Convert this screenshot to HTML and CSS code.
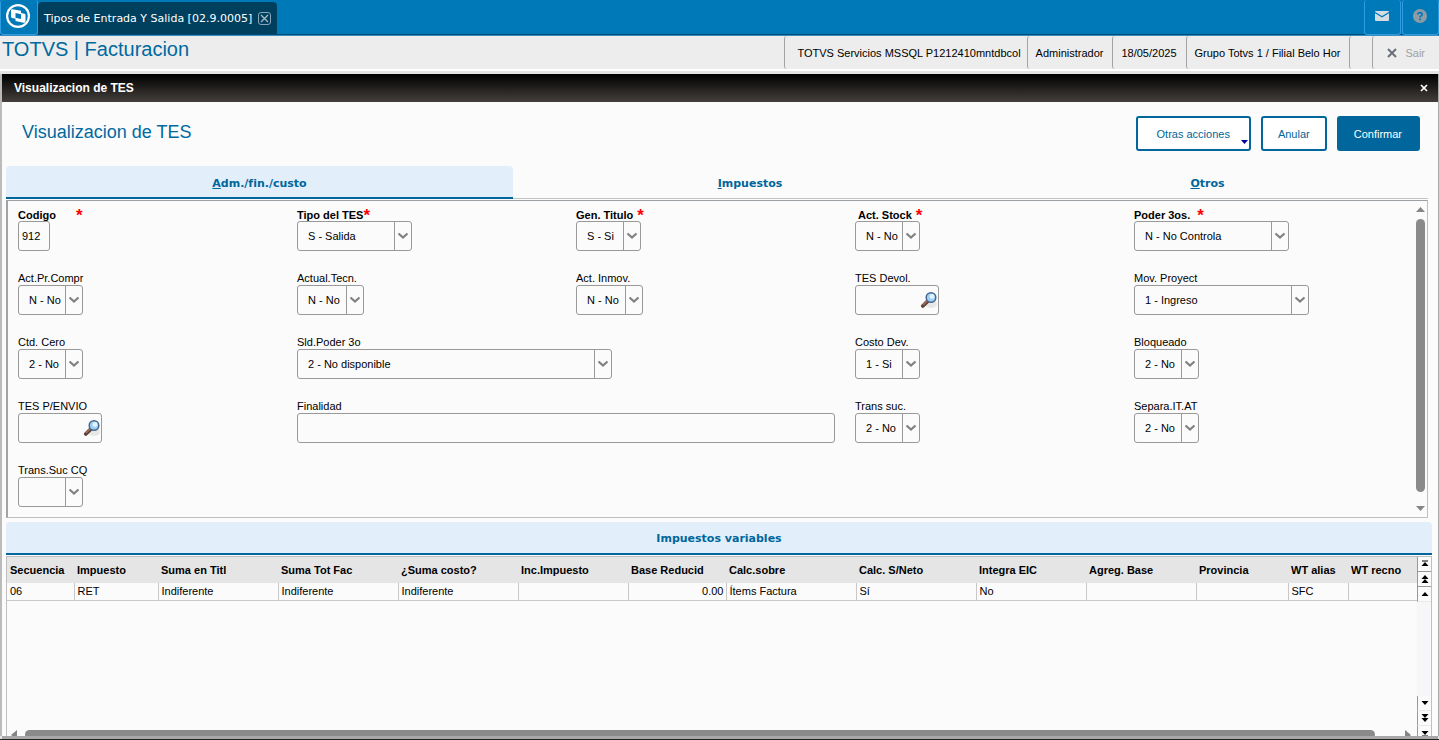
FILE: index.html
```html
<!DOCTYPE html>
<html lang="es">
<head>
<meta charset="utf-8">
<title>TOTVS | Facturacion</title>
<link rel="stylesheet" href="styles.css">
</head>
<body>
<svg class="defs" aria-hidden="true">
  <symbol id="chevron" viewBox="0 0 12 8"><path d="M1.5 1.5 L6 5.5 L10.500 1.500" fill="none" stroke="#808080" stroke-width="2.200"/></symbol>
  <symbol id="lens" viewBox="0 0 18 18">
    <ellipse cx="11" cy="13" rx="6" ry="4" fill="#000" opacity=".08"/>
    <path d="M2.800 15 L8 9.800" stroke="#5d4238" stroke-width="3.800" stroke-linecap="round"/>
    <path d="M3 14 L7.500 9.500" stroke="#a5705a" stroke-width="1.400"/>
    <circle cx="11" cy="6.500" r="4.800" fill="#9fd0f3" stroke="#48698f" stroke-width="1.500"/>
    <circle cx="12" cy="5.500" r="2.400" fill="#e3f3fd"/>
  </symbol>
</svg>
<header class="appbar">
  <button class="logo" aria-label="TOTVS">
    <svg width="24" height="24" viewBox="0 0 24 24"><circle cx="12" cy="12" r="12" fill="#fff"/><circle cx="12" cy="12" r="9.800" fill="#0079b8"/><path d="M5 6 Q5.200 5.200 6.500 5.300 L15 6.800 V9 L18.500 9.800 Q19.500 10.100 19.500 11 V17.500 Q19 19 17.500 18.700 L9.500 17 V14.800 L6 14 Q5 13.800 5 12.500 Z" fill="#fff"/><path d="M9.500 9 L15 10.200 V15 L9.500 13.800 Z" fill="#0079b8"/></svg>
  </button>
  <div class="apptab">
    <span>Tipos de Entrada Y Salida [02.9.0005]</span>
    <button class="tabclose" aria-label="Cerrar"><svg width="13" height="13" viewBox="0 0 13 13"><rect x=".5" y=".5" width="12" height="12" rx="2.500" fill="none" stroke="#8ba5b8"/><path d="M3 3 L10 10 M10 3 L3 10" stroke="#a9bac7" stroke-width="1.300"/></svg></button>
  </div>
  <div class="tools">
    <button aria-label="Mensajes"><svg width="14" height="10" viewBox="0 0 14 10"><rect width="14" height="10" rx="1" fill="#d5dde3"/><path d="M0 1.500 L7 5.800 L14 1.500" fill="none" stroke="#0079b8" stroke-width="1.300"/></svg></button>
    <button aria-label="Ayuda"><svg width="14" height="14" viewBox="0 0 14 14"><circle cx="7" cy="7" r="7" fill="#8e9ba5"/><path d="M4.800 5.500 Q4.900 3.600 7 3.600 Q9.200 3.600 9.200 5.300 Q9.200 6.300 8 7 Q7 7.500 7 8.500" fill="none" stroke="#0079b8" stroke-width="1.700"/><rect x="6.100" y="9.500" width="1.800" height="1.700" fill="#0079b8"/></svg></button>
  </div>
</header>
<div class="infobar">
  <h1>TOTVS | Facturacion</h1>
  <div class="info">
    <span class="cell env">TOTVS Servicios MSSQL P1212410mntdbcol</span>
    <span class="cell">Administrador</span>
    <span class="cell">18/05/2025</span>
    <span class="cell">Grupo Totvs 1 / Filial Belo Hor</span>
    <span class="cell blank"></span>
    <button class="cell exit"><svg width="10" height="10" viewBox="0 0 10 10"><path d="M1 1 L9 9 M9 1 L1 9" stroke="#6b7078" stroke-width="2"/></svg>Sair</button>
  </div>
</div>
<main class="dialog">
  <div class="titlebar"><span>Visualizacion de TES</span><button aria-label="Cerrar ventana"><svg width="8" height="8" viewBox="0 0 8 8"><path d="M1 1 L7 7 M7 1 L1 7" stroke="#fff" stroke-width="1.700"/></svg></button></div>
  <div class="heading">
    <h2>Visualizacion de TES</h2>
    <div class="actions">
      <button class="btn more">Otras acciones<svg class="caret" width="7" height="4" viewBox="0 0 7 4"><path d="M0 0 H7 L3.500 4 Z" fill="#00009c"/></svg></button>
      <button class="btn">Anular</button>
      <button class="btn primary">Confirmar</button>
    </div>
  </div>
  <nav class="tabs">
    <a class="tab active" href="#adm"><span><u>A</u>dm./fin./custo</span></a>
    <a class="tab mid" href="#imp"><span><u>I</u>mpuestos</span></a>
    <a class="tab last" href="#otros"><span><u>O</u>tros</span></a>
  </nav>
  <section class="panel" id="adm">
    <form class="fields">
      <div class="field"><div class="req far"><label for="f1">Codigo</label><b class="star">*</b></div><input id="f1" class="w-code" value="912"></div>
      <div class="field"><div class="req near"><label for="f2">Tipo del TES</label><b class="star">*</b></div><span class="sel w-115"><select id="f2"><option>S - Salida</option></select><i><svg><use href="#chevron"/></svg></i></span></div>
      <div class="field"><div class="req"><label for="f3">Gen. Titulo</label><b class="star">*</b></div><span class="sel w-65"><select id="f3"><option>S - Si</option></select><i><svg><use href="#chevron"/></svg></i></span></div>
      <div class="field"><div class="req indent"><label for="f4">Act. Stock</label><b class="star">*</b></div><span class="sel w-65"><select id="f4"><option>N - No</option></select><i><svg><use href="#chevron"/></svg></i></span></div>
      <div class="field"><div class="req wide"><label for="f5">Poder 3os.</label><b class="star">*</b></div><span class="sel w-155"><select id="f5"><option>N - No Controla</option></select><i><svg><use href="#chevron"/></svg></i></span></div>

      <div class="field"><label for="f6">Act.Pr.Compr</label><span class="sel w-65"><select id="f6"><option>N - No</option></select><i><svg><use href="#chevron"/></svg></i></span></div>
      <div class="field"><label for="f7">Actual.Tecn.</label><span class="sel w-67"><select id="f7"><option>N - No</option></select><i><svg><use href="#chevron"/></svg></i></span></div>
      <div class="field"><label for="f8">Act. Inmov.</label><span class="sel w-67"><select id="f8"><option>N - No</option></select><i><svg><use href="#chevron"/></svg></i></span></div>
      <div class="field"><label for="f9">TES Devol.</label><span class="lookup"><input id="f9"><button type="button" aria-label="Buscar TES Devol."><svg><use href="#lens"/></svg></button></span></div>
      <div class="field"><label for="f10">Mov. Proyect</label><span class="sel w-175"><select id="f10"><option>1 - Ingreso</option></select><i><svg><use href="#chevron"/></svg></i></span></div>

      <div class="field"><label for="f11">Ctd. Cero</label><span class="sel w-65"><select id="f11"><option>2 - No</option></select><i><svg><use href="#chevron"/></svg></i></span></div>
      <div class="field span2"><label for="f12">Sld.Poder 3o</label><span class="sel w-315"><select id="f12"><option>2 - No disponible</option></select><i><svg><use href="#chevron"/></svg></i></span></div>
      <div class="field"><label for="f13">Costo Dev.</label><span class="sel w-65"><select id="f13"><option>1 - Si</option></select><i><svg><use href="#chevron"/></svg></i></span></div>
      <div class="field"><label for="f14">Bloqueado</label><span class="sel w-65"><select id="f14"><option>2 - No</option></select><i><svg><use href="#chevron"/></svg></i></span></div>

      <div class="field"><label for="f15">TES P/ENVIO</label><span class="lookup"><input id="f15"><button type="button" aria-label="Buscar TES P/ENVIO"><svg><use href="#lens"/></svg></button></span></div>
      <div class="field span2"><label for="f16">Finalidad</label><input id="f16" class="w-full"></div>
      <div class="field"><label for="f17">Trans suc.</label><span class="sel w-65"><select id="f17"><option>2 - No</option></select><i><svg><use href="#chevron"/></svg></i></span></div>
      <div class="field"><label for="f18">Separa.IT.AT</label><span class="sel w-65"><select id="f18"><option>2 - No</option></select><i><svg><use href="#chevron"/></svg></i></span></div>

      <div class="field"><label for="f19">Trans.Suc CQ</label><span class="sel w-65"><select id="f19"><option></option></select><i><svg><use href="#chevron"/></svg></i></span></div>
    </form>
    <div class="vscroll">
      <svg width="9" height="5" viewBox="0 0 9 5"><path d="M0 5 L4.500 0 L9 5 Z" fill="#858585"/></svg>
      <div class="thumb"></div>
      <svg class="down" width="9" height="5" viewBox="0 0 9 5"><path d="M0 0 L4.500 5 L9 0 Z" fill="#858585"/></svg>
    </div>
  </section>
  <h3 class="gridtitle">Impuestos variables</h3>
  <section class="grid">
    <div class="gridmain">
      <table>
        <colgroup><col class="c67"><col class="c84"><col class="c120"><col class="c120"><col class="c120"><col class="c110"><col class="c98"><col class="c130"><col class="c120"><col class="c110"><col class="c110"><col class="c92"><col class="c60"><col></colgroup>
        <thead><tr><th>Secuencia</th><th>Impuesto</th><th>Suma en Titl</th><th>Suma Tot Fac</th><th>¿Suma costo?</th><th>Inc.Impuesto</th><th>Base Reducid</th><th>Calc.sobre</th><th>Calc. S/Neto</th><th>Integra EIC</th><th>Agreg. Base</th><th>Provincia</th><th>WT alias</th><th>WT recno</th></tr></thead>
        <tbody><tr><td>06</td><td>RET</td><td>Indiferente</td><td>Indiferente</td><td>Indiferente</td><td></td><td class="num">0.00</td><td>Ítems Factura</td><td>Sí</td><td>No</td><td></td><td></td><td>SFC</td><td></td></tr></tbody>
      </table>
      <div class="hscroll">
        <svg width="6" height="10" viewBox="0 0 6 10"><path d="M6 0 L0 5 L6 10 Z" fill="#858585"/></svg>
        <div class="thumb"></div>
        <svg width="6" height="10" viewBox="0 0 6 10"><path d="M0 0 L6 5 L0 10 Z" fill="#858585"/></svg>
      </div>
    </div>
    <div class="gridnav">
      <button aria-label="Primero"><svg width="8" height="8" viewBox="0 0 8 8"><path d="M1 1 H7" stroke="#000"/><path d="M4 2 L7.500 6 H.5 Z"/></svg></button>
      <button aria-label="Página anterior"><svg width="8" height="8" viewBox="0 0 8 8"><path d="M4 0 L7.500 4 H.5 Z M4 4 L7.500 8 H.5 Z"/></svg></button>
      <button class="plain" aria-label="Anterior"><svg width="8" height="8" viewBox="0 0 8 8"><path d="M4 2 L7.500 6 H.5 Z"/></svg></button>
      <button class="plain low" aria-label="Siguiente"><svg width="8" height="8" viewBox="0 0 8 8"><path d="M4 6 L7.500 2 H.5 Z"/></svg></button>
      <button class="plain" aria-label="Página siguiente"><svg width="8" height="8" viewBox="0 0 8 8"><path d="M4 4 L7.500 0 H.5 Z M4 8 L7.500 4 H.5 Z"/></svg></button>
      <button class="plain" aria-label="Último"><svg width="8" height="8" viewBox="0 0 8 8"><path d="M4 6 L7.500 2 H.5 Z"/><path d="M1 7 H7" stroke="#000"/></svg></button>
    </div>
  </section>
</main>
</body>
</html>
```

FILE: styles.css
```css
* { box-sizing: border-box; }
body { margin: 0; height: 100vh; display: flex; flex-direction: column; overflow: hidden; background: #e4e4e4; color: #000; font: 11px "Liberation Sans", Arial, sans-serif; border-bottom: 1px solid #222; }
button, input, select { font: inherit; color: inherit; }
button { background: none; border: 0; padding: 0; margin: 0; cursor: pointer; }
h1, h2, h3 { margin: 0; font-weight: normal; }
svg { display: block; flex: none; }
.defs { position: absolute; width: 0; height: 0; }

.appbar { flex: none; height: 36px; display: flex; background: #0079b8; border-bottom: 1px solid #3b8fc0; box-shadow: inset 0 -1px #004a73; }
.logo { width: 38px; height: 35px; padding: 0 0 3px 5px; border: 1px solid #2f9be0; border-top: 0; border-radius: 3px; background: #0079b8; }
.apptab { display: flex; align-items: center; gap: 6px; margin-top: 2px; padding: 0 6px; height: 32px; background: #00405f; border-radius: 4px 4px 0 0; color: #fff; font: 11px "DejaVu Sans", sans-serif; }
.tools { margin-left: auto; display: flex; gap: 1px; }
.tools button { width: 37px; height: 35px; padding: 0 2px 3px 0; display: grid; place-items: center; border: 1px solid #2f9be0; border-top: 0; border-radius: 3px; background: #0079b8; }

.infobar { flex: none; height: 35px; display: flex; justify-content: space-between; background: #ededed; border-bottom: 2px solid #fff; }
.infobar h1 { padding-left: 2px; font-size: 20px; line-height: 26px; color: #0069a0; }
.info { display: flex; }
.cell { display: flex; align-items: center; padding: 0 9px 0 8px; border-left: 1px solid #a3a3a3; border-radius: 3px; }
.env { padding: 0 6px 0 12px; }
.blank { width: 23px; padding: 0; }
.exit { gap: 8px; padding: 0 14px; color: #a0a0a0; border-left: 1px solid #a3a3a3; }

.dialog { flex: 1; min-height: 0; display: flex; flex-direction: column; margin: 3px 1px 3px 2px; background: #fbfbfb; box-shadow: -2px 0 #bbb, 1px 0 #a8a8a8, 0 3px #a8a8a8; overflow: hidden; }
.titlebar { flex: none; height: 28px; display: flex; align-items: center; justify-content: space-between; padding: 0 10px 0 12px; background: linear-gradient(#000, #443f3c); color: #fff; font-size: 12px; font-weight: bold; }
.heading { flex: none; display: flex; justify-content: space-between; padding: 14px 18px 15px 20px; }
.heading h2 { font-size: 18px; line-height: 32px; color: #0069a0; }
.actions { display: flex; gap: 10px; }
.btn { height: 35px; padding: 0 15px; border: 2px solid #00669b; border-radius: 3px; background: #fff; color: #00669b; }
.more { position: relative; padding: 0 19px; }
.caret { position: absolute; right: 1px; bottom: 5px; }
.primary { padding: 0 16px 0 15px; background: #00669b; color: #fff; }

.tabs { flex: none; display: flex; margin: 0 10px 0 4px; }
.tab { flex: 507 1 0; height: 33px; padding-top: 3px; display: grid; place-items: center; border-bottom: 2px solid #00669b; border-radius: 4px 4px 0 0; color: #00669b; font: bold 11px "DejaVu Sans", sans-serif; text-decoration: none; }
.active { background: #e2eefa; }
.mid { flex-grow: 474; border-bottom: 1px solid #c4c4c4; border-radius: 0; }
.last { flex-grow: 441; border-bottom: 1px solid #c4c4c4; border-radius: 0; }
.panel { flex: none; display: flex; margin: 1px 10px 4px 4px; border: 1px solid #bfbfbf; border-top-color: #9ba0a5; border-left: 2px solid #a0a4a6; }
.fields { flex: 1; display: grid; grid-template-columns: repeat(5, minmax(0, 1fr)); row-gap: 20px; padding: 6px 0 10px 10px; }
.field { display: flex; flex-direction: column; align-items: flex-start; }
.field label { line-height: 14px; }
.req { display: flex; gap: 4px; height: 14px; font-weight: bold; }
.req label { line-height: 16px; }
.star { color: #f00; font-size: 17px; line-height: 17px; }
.far { gap: 20px; }
.near { gap: 0; }
.wide { gap: 7px; }
.indent { padding-left: 3px; }
.span2 { grid-column: span 2; }
.field input, .sel, .lookup { height: 30px; border: 1px solid #999; border-radius: 3px; background: #fbfbfb; }
.field input { padding: 0 3px; outline: 0; }
.sel { position: relative; display: block; overflow: hidden; }
.sel select { appearance: none; width: 100%; height: 28px; padding: 0 17px 0 10px; border: 0; outline: 0; background: transparent; }
.sel i { position: absolute; top: 0; right: 0; width: 17px; height: 28px; display: grid; place-items: center; border-left: 1px solid #999; pointer-events: none; }
.sel svg { width: 12px; height: 8px; }
.lookup { width: 84px; display: flex; align-items: center; }
.field .lookup input { flex: 1; min-width: 0; height: 26px; border: 0; }
.lookup svg { width: 18px; height: 18px; }
.w-code { width: 32px; }
.w-65 { width: 65px; }
.w-67 { width: 67px; }
.w-115 { width: 115px; }
.w-155 { width: 155px; }
.w-175 { width: 175px; }
.w-315 { width: 315px; }
.w-full { width: calc(100% - 20px); }

.vscroll { flex: none; width: 14px; display: flex; flex-direction: column; align-items: center; gap: 5px; padding: 6px 0 6px; }
.vscroll .thumb { flex: 1; width: 9px; margin: 2px 0 9px; border-radius: 5px; background: #8a8a8a; }

.gridtitle { flex: none; margin: 0 6px 0 4px; height: 33px; border-bottom: 2px solid #00669b; border-radius: 4px 4px 0 0; background: #e2eefa; color: #00669b; font: bold 11px/34px "DejaVu Sans", sans-serif; text-align: center; }
.grid { flex: 1; min-height: 0; display: flex; margin: 1px 6px 0 4px; border: 1px solid #bfbfbf; border-bottom: 0; }
.gridmain { flex: 1; min-width: 0; display: flex; flex-direction: column; justify-content: space-between; }
table { width: 100%; table-layout: fixed; border-collapse: collapse; }
th, td { padding: 0 2px 0 3px; text-align: left; white-space: nowrap; }
th { height: 26px; background: #e5e5e5; }
td { height: 17px; border: 1px solid #c8c8c8; border-top: 0; }
td:first-child { border-left: 0; }
td:last-child { border-right: 0; }
td.num { text-align: right; }
.c60 { width: 60px; } .c67 { width: 67px; } .c84 { width: 84px; } .c92 { width: 92px; } .c98 { width: 98px; }
.c110 { width: 110px; } .c120 { width: 120px; } .c130 { width: 130px; }
.hscroll { height: 6px; display: flex; gap: 8px; padding: 0 6px 0 4px; overflow: hidden; }
.hscroll .thumb { flex: 1; height: 9px; margin-right: 22px; border-radius: 5px; background: #8a8a8a; }
.gridnav { flex: none; width: 14px; display: flex; flex-direction: column; background: #f7f7fa; margin-bottom: -5px; }
.gridnav button { flex: none; height: 15px; display: grid; place-items: center; border-left: 1px solid #999; border-bottom: 1px solid #999; background: #fbfbfb; }
.gridnav .plain { border-bottom-color: #e8e8e8; }
.gridnav .low { margin-top: auto; }
```
